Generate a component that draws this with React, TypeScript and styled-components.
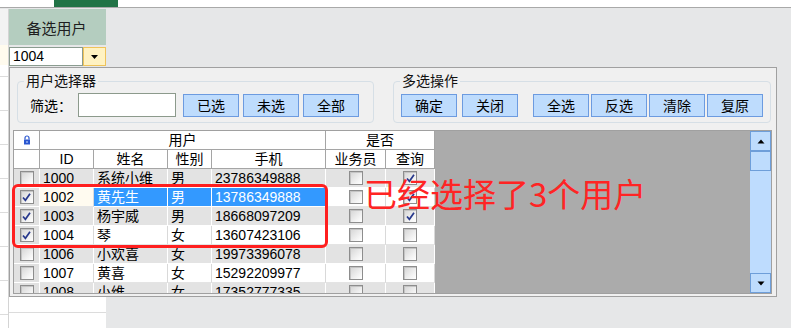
import React from "react";
import styled, { createGlobalStyle } from "styled-components";

const GlobalStyle = createGlobalStyle`
  html, body {
    margin: 0;
    padding: 0;
  }
  body {
    width: 791px;
    height: 328px;
    overflow: hidden;
    background: #e6e7e8;
    font-family: "Liberation Sans", "Noto Sans CJK SC", sans-serif;
    font-size: 14px;
    color: #000;
  }
`;

type Row = {
  id: string;
  name: string;
  sex: string;
  phone: string;
  picked: boolean;
  staff: boolean;
  query: boolean;
  active?: boolean;
};

const rows: Row[] = [
  { id: "1000", name: "系统小维", sex: "男", phone: "23786349888", picked: false, staff: false, query: true },
  { id: "1002", name: "黄先生", sex: "男", phone: "13786349888", picked: true, staff: false, query: true, active: true },
  { id: "1003", name: "杨宇威", sex: "男", phone: "18668097209", picked: true, staff: false, query: true },
  { id: "1004", name: "琴", sex: "女", phone: "13607423106", picked: true, staff: false, query: false },
  { id: "1006", name: "小欢喜", sex: "女", phone: "19973396078", picked: false, staff: false, query: false },
  { id: "1007", name: "黄喜", sex: "女", phone: "15292209977", picked: false, staff: false, query: false },
  { id: "1008", name: "小维", sex: "女", phone: "17352777335", picked: false, staff: false, query: false },
];

const Page = styled.div`
  width: 791px;
  height: 328px;
  display: flex;
  flex-direction: column;
`;

const TopBar = styled.div`
  height: 7px;
  background: #fff;
  border-bottom: 1px solid #a9a9a9;
  display: flex;
`;

const SheetTab = styled.div`
  margin-left: 54px;
  width: 64px;
  height: 7px;
  background: #217346;
`;

const Body = styled.div`
  flex: 1;
  display: flex;
  padding-top: 1px;
`;

const SheetEdge = styled.div`
  width: 8px;
  border-right: 1px solid #d4d4d4;
  background:
    linear-gradient(#f3f3f3 0 36px, #fffbee 36px 56px, transparent 56px),
    repeating-linear-gradient(to bottom, #fff 0 33px, #dcdcdc 33px 34px);
`;

const Column = styled.div`
  display: flex;
  flex-direction: column;
`;

const LaunchButton = styled.div`
  width: 97px;
  height: 36px;
  background: #b4cdbf;
  color: #1e1e1e;
  font-size: 15px;
  display: flex;
  align-items: center;
  justify-content: center;
  padding-right: 2px;
  box-sizing: border-box;
`;

const Combo = styled.div`
  margin-top: 2px;
  width: 97px;
  height: 19px;
  display: flex;
`;

const ComboText = styled.div`
  flex: 1;
  border: 1px solid #8b9c90;
  background: #fff;
  font-size: 14px;
  line-height: 17px;
  padding-left: 3px;
`;

const ComboDrop = styled.div`
  width: 21px;
  border: 1px solid #efc35a;
  background: #fff2c2;
  display: flex;
  align-items: center;
  justify-content: center;
`;

const Form = styled.div`
  margin-top: 1px;
  width: 768px;
  height: 230px;
  box-sizing: border-box;
  border: 1px solid #a0a0a0;
  background: #f0f0f0;
  display: flex;
  flex-direction: column;
`;

const Groups = styled.div`
  display: flex;
  gap: 19px;
  margin: 5px 0 0 7px;
`;

const Group = styled.fieldset<{ $w: number }>`
  margin: 0;
  padding: 0;
  width: ${(p) => p.$w}px;
  height: 50px;
  box-sizing: border-box;
  border: 1px solid #d6dfe6;
  border-radius: 4px;
`;

const Legend = styled.legend`
  margin-left: 6px;
  padding: 0 2px;
  font-size: 14px;
  line-height: 16px;
  color: #111;
`;

const GroupRow = styled.div<{ $pl: number }>`
  display: flex;
  align-items: center;
  height: 24px;
  margin-top: 4px;
  padding-left: ${(p) => p.$pl}px;
`;

const Label = styled.span`
  width: 48px;
  font-size: 14px;
`;

const FilterInput = styled.div`
  width: 98px;
  height: 24px;
  box-sizing: border-box;
  border: 1px solid #8c9a8c;
  background: #fff;
`;

const Btn = styled.div<{ $gap: number }>`
  margin-left: ${(p) => p.$gap}px;
  width: 56px;
  height: 23px;
  box-sizing: border-box;
  border: 1px solid #6c9be0;
  background: #bedcfd;
  font-size: 14px;
  display: flex;
  align-items: center;
  justify-content: center;
`;

const Grid = styled.div`
  position: relative;
  margin: 7px 0 0 3px;
  width: 759px;
  height: 164px;
  box-sizing: border-box;
  border: 1px solid #a0a0a0;
  display: flex;
`;

const Table = styled.div`
  display: grid;
  grid-template-columns: 26px 54px 74px 44px 114px 60px 49px;
  grid-auto-rows: 19px;
  align-content: start;
  overflow: hidden;
`;

const Head = styled.div<{ $span?: number }>`
  grid-column: span ${(p) => p.$span ?? 1};
  background: #fff;
  border-right: 1px solid #a5a5a5;
  border-bottom: 1px solid #a5a5a5;
  display: flex;
  align-items: center;
  justify-content: center;
  font-size: 14px;
  line-height: 18px;
`;

const Cell = styled.div<{ $tone: "gray" | "white" | "blue" | "edit" | "side"; $center?: boolean }>`
  background: ${(p) =>
    ({ gray: "#e3e3e3", white: "#fff", blue: "#3399ff", edit: "#fffbf0", side: "#e1e1e1" })[p.$tone]};
  color: ${(p) => (p.$tone === "blue" ? "#fff" : "#000")};
  border-right: 1px solid ${(p) => (p.$tone === "white" || p.$tone === "edit" ? "#d9d9d9" : "#fff")};
  border-bottom: 1px solid ${(p) => (p.$tone === "white" || p.$tone === "edit" ? "#e4e4e4" : "#fff")};
  display: flex;
  align-items: center;
  justify-content: ${(p) => (p.$center ? "center" : "flex-start")};
  padding-left: ${(p) => (p.$center ? 0 : 3)}px;
  font-size: 14px;
  line-height: 18px;
  white-space: nowrap;
  overflow: hidden;
`;

const Box = styled.span`
  width: 14px;
  height: 14px;
  box-sizing: border-box;
  border: 1px solid #8d8d8d;
  background: linear-gradient(135deg, #d4d4d4 0%, #f4f4f4 70%, #fff 100%);
  box-shadow: inset 1px 1px 0 #c4c4c4;
  display: flex;
  align-items: center;
  justify-content: center;
`;

const Backdrop = styled.div`
  flex: 1;
  background: #ababab;
`;

const Scroll = styled.div`
  width: 21px;
  background: #bedcfe;
  display: flex;
  flex-direction: column;
`;

const ScrollBtn = styled.div<{ $push?: boolean }>`
  height: 20px;
  margin-top: ${(p) => (p.$push ? "auto" : "0")};
  box-sizing: border-box;
  border: 1px solid #6e9ed9;
  background: #bedcfd;
  display: flex;
  align-items: center;
  justify-content: center;
`;

const Frame = styled.div`
  position: absolute;
  left: -2px;
  top: 53px;
  width: 316px;
  height: 64px;
  box-sizing: border-box;
  border: 3px solid #ff1f1f;
  border-radius: 6px;
  pointer-events: none;
`;

const Note = styled.div`
  position: absolute;
  left: 350px;
  top: 46px;
  font-family: "Noto Sans CJK SC", sans-serif;
  font-size: 33px;
  line-height: 33px;
  color: #ff2424;
  white-space: nowrap;
`;

const BottomCells = styled.div`
  width: 97px;
  flex: 1;
  background: linear-gradient(#fff 0 15px, #dcdcdc 15px 16px, #fff 16px);
`;

const Check = ({ on }: { on: boolean }) => (
  <Box>
    {on && (
      <svg width="11" height="11" viewBox="0 0 11 11">
        <path d="M2 5.5 L4.4 8.3 L9 1.8" stroke="#27388c" strokeWidth="1.7" fill="none" />
      </svg>
    )}
  </Box>
);

const Lock = () => (
  <svg width="8" height="10" viewBox="0 0 8 10">
    <path d="M2 4.5V3a2 2 0 0 1 4 0v1.5" stroke="#2a57d0" strokeWidth="1.2" fill="none" />
    <rect x="1" y="4.5" width="6" height="5" fill="#2a57d0" />
    <rect x="3.5" y="6" width="1" height="2" fill="#cfe0ff" />
  </svg>
);

const Arrow = ({ up }: { up?: boolean }) => (
  <svg width="8" height="5" viewBox="0 0 8 5">
    <path d={up ? "M0.5 4.5 L4 0.5 L7.5 4.5Z" : "M0.5 0.5 L4 4.5 L7.5 0.5Z"} fill="#000" />
  </svg>
);

export default function App() {
  return (
    <Page>
      <GlobalStyle />
      <TopBar>
        <SheetTab />
      </TopBar>
      <Body>
        <SheetEdge />
        <Column>
          <LaunchButton>备选用户</LaunchButton>
          <Combo>
            <ComboText>1004</ComboText>
            <ComboDrop>
              <svg width="7" height="4" viewBox="0 0 7 4">
                <path d="M0 0 H7 L3.5 4Z" fill="#000" />
              </svg>
            </ComboDrop>
          </Combo>
          <Form>
            <Groups>
              <Group $w={357}>
                <Legend>用户选择器</Legend>
                <GroupRow $pl={12}>
                  <Label>筛选：</Label>
                  <FilterInput />
                  <Btn $gap={7}>已选</Btn>
                  <Btn $gap={4}>未选</Btn>
                  <Btn $gap={4}>全部</Btn>
                </GroupRow>
              </Group>
              <Group $w={378}>
                <Legend>多选操作</Legend>
                <GroupRow $pl={7}>
                  <Btn $gap={0}>确定</Btn>
                  <Btn $gap={5}>关闭</Btn>
                  <Btn $gap={15}>全选</Btn>
                  <Btn $gap={2}>反选</Btn>
                  <Btn $gap={2}>清除</Btn>
                  <Btn $gap={2}>复原</Btn>
                </GroupRow>
              </Group>
            </Groups>
            <Grid>
              <Table>
                <Head>
                  <Lock />
                </Head>
                <Head $span={4}>用户</Head>
                <Head $span={2}>是否</Head>
                <Head />
                <Head>ID</Head>
                <Head>姓名</Head>
                <Head>性别</Head>
                <Head>手机</Head>
                <Head>业务员</Head>
                <Head>查询</Head>
                {rows.map((r, i) => {
                  const tone = i % 2 === 0 ? "gray" : "white";
                  const main = r.active ? "blue" : tone;
                  return (
                    <React.Fragment key={r.id}>
                      <Cell $tone="side" $center>
                        <Check on={r.picked} />
                      </Cell>
                      <Cell $tone={r.active ? "edit" : tone}>{r.id}</Cell>
                      <Cell $tone={main}>{r.name}</Cell>
                      <Cell $tone={main}>{r.sex}</Cell>
                      <Cell $tone={main}>{r.phone}</Cell>
                      <Cell $tone={tone} $center>
                        <Check on={r.staff} />
                      </Cell>
                      <Cell $tone={tone} $center>
                        <Check on={r.query} />
                      </Cell>
                    </React.Fragment>
                  );
                })}
              </Table>
              <Backdrop />
              <Scroll>
                <ScrollBtn>
                  <Arrow up />
                </ScrollBtn>
                <ScrollBtn />
                <ScrollBtn $push>
                  <Arrow />
                </ScrollBtn>
              </Scroll>
              <Frame />
              <Note>已经选择了3个用户</Note>
            </Grid>
          </Form>
          <BottomCells />
        </Column>
      </Body>
    </Page>
  );
}
